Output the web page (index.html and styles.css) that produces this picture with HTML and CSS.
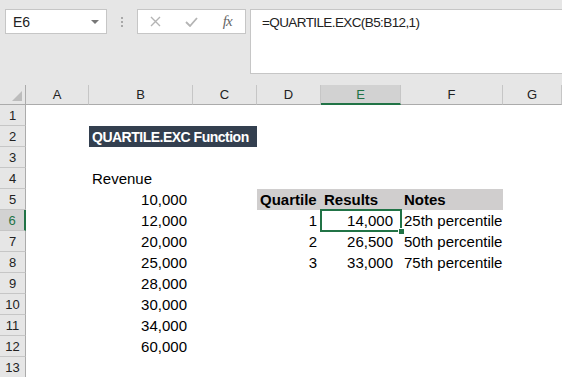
FILE: index.html
```html
<!DOCTYPE html>
<html lang="en">
<head>
  <meta charset="UTF-8">
  <meta name="viewport" content="width=device-width, initial-scale=1.0">
  <title>QUARTILE.EXC Function</title>
  <link rel="stylesheet" href="styles.css">
</head>
<body>
  <div class="toolbar">
    <div class="namebox">
      <span>E6</span>
      <span class="caret"></span>
    </div>
    <div class="grip"><span></span><span></span><span></span></div>
    <div class="fxbar">
      <span class="fxbtn">
        <svg width="11" height="11" viewBox="0 0 11 11"><path d="M1 1 L10 10 M10 1 L1 10" stroke="#b4b4b4" stroke-width="1.4" fill="none"/></svg>
      </span>
      <span class="fxbtn">
        <svg width="13" height="10" viewBox="0 0 13 10"><path d="M1 5 L5 9 L12 1" stroke="#b4b4b4" stroke-width="1.8" fill="none"/></svg>
      </span>
      <span class="fxbtn fx">fx</span>
    </div>
    <div class="formula">=QUARTILE.EXC(B5:B12,1)</div>
  </div>

  <div class="sheet">
    <div class="row head">
      <div class="corner"><span class="tri"></span></div>
      <div class="ch">A</div>
      <div class="ch">B</div>
      <div class="ch">C</div>
      <div class="ch">D</div>
      <div class="ch on">E</div>
      <div class="ch">F</div>
      <div class="ch">G</div>
    </div>
    <div class="row"><div class="rh">1</div></div>
    <div class="row"><div class="rh">2</div><div class="cell title">QUARTILE.EXC Function</div></div>
    <div class="row"><div class="rh">3</div></div>
    <div class="row"><div class="rh">4</div><div class="cell col-b">Revenue</div></div>
    <div class="row">
      <div class="rh">5</div>
      <div class="cell col-b num">10,000</div>
      <div class="cell col-d th">Quartile</div>
      <div class="cell col-e th">Results</div>
      <div class="cell col-f th">Notes</div>
    </div>
    <div class="row">
      <div class="rh on">6</div>
      <div class="cell col-b num">12,000</div>
      <div class="cell col-d int">1</div>
      <div class="cell col-e res active">14,000</div>
      <div class="cell col-f">25th percentile</div>
    </div>
    <div class="row">
      <div class="rh">7</div>
      <div class="cell col-b num">20,000</div>
      <div class="cell col-d int">2</div>
      <div class="cell col-e res">26,500</div>
      <div class="cell col-f">50th percentile</div>
    </div>
    <div class="row">
      <div class="rh">8</div>
      <div class="cell col-b num">25,000</div>
      <div class="cell col-d int">3</div>
      <div class="cell col-e res">33,000</div>
      <div class="cell col-f">75th percentile</div>
    </div>
    <div class="row"><div class="rh">9</div><div class="cell col-b num">28,000</div></div>
    <div class="row"><div class="rh">10</div><div class="cell col-b num">30,000</div></div>
    <div class="row"><div class="rh">11</div><div class="cell col-b num">34,000</div></div>
    <div class="row"><div class="rh">12</div><div class="cell col-b num">60,000</div></div>
    <div class="row"><div class="rh">13</div></div>
  </div>
</body>
</html>
```

FILE: styles.css
```css
* {
  box-sizing: border-box;
}
body {
  margin: 0;
  width: 562px;
  height: 377px;
  overflow: hidden;
  font-family: "Liberation Sans", Arial, sans-serif;
  background-color: #fff;
  color: #000;
}
.toolbar {
  display: flex;
  align-items: flex-start;
  height: 85px;
  padding: 9px 0 0 5px;
  background-color: #e6e6e6;
}
.namebox {
  display: flex;
  justify-content: space-between;
  align-items: center;
  width: 102px;
  height: 25px;
  padding: 0 7px 0 7px;
  background-color: #fff;
  border: 1px solid #c6c6c6;
  font-size: 14px;
  color: #222;
}
.caret {
  width: 0;
  height: 0;
  border-left: 4px solid transparent;
  border-right: 4px solid transparent;
  border-top: 4px solid #777;
}
.grip {
  display: flex;
  flex-direction: column;
  gap: 2px;
  margin: 8px 0 0 14px;
}
.grip span {
  width: 2px;
  height: 2px;
  background-color: #a8a8a8;
}
.fxbar {
  display: flex;
  align-items: center;
  width: 109px;
  height: 25px;
  margin-left: 14px;
  background-color: #fff;
  border: 1px solid #c6c6c6;
}
.fxbtn {
  display: flex;
  justify-content: center;
  align-items: center;
  width: 36px;
}
.fx {
  font-family: "Liberation Serif", serif;
  font-style: italic;
  font-size: 15px;
  color: #666;
  letter-spacing: -1px;
}
.formula {
  flex: 1;
  height: 65px;
  margin-left: 4px;
  padding: 3px 0 0 11px;
  background-color: #fff;
  border: 1px solid #c6c6c6;
  border-right: none;
  font-size: 13.5px;
  line-height: 20px;
  letter-spacing: -0.6px;
  color: #222;
}
.row {
  display: grid;
  grid-template-columns: 26px 63px 104px 64px 64px 80px 102px 1fr;
  grid-template-rows: 21px;
  font-size: 15px;
}
.row.head {
  grid-template-rows: 20px;
  background-color: #e6e6e6;
}
.corner {
  display: flex;
  justify-content: flex-end;
  align-items: flex-end;
  padding: 0 3px 3px 0;
  border-right: 1px solid #ababab;
  border-bottom: 1px solid #ababab;
}
.tri {
  width: 0;
  height: 0;
  border-left: 10px solid transparent;
  border-bottom: 10px solid #bcbcbc;
}
.ch {
  display: flex;
  justify-content: center;
  align-items: center;
  font-size: 13px;
  color: #222;
  border-right: 1px solid #c6c6c6;
  border-bottom: 1px solid #ababab;
}
.ch.on {
  background-color: #d2d2d2;
  color: #217346;
  border-bottom: 2px solid #217346;
}
.rh {
  grid-column: 1;
  display: flex;
  justify-content: center;
  align-items: center;
  font-size: 13px;
  color: #222;
  background-color: #e6e6e6;
  border-right: 1px solid #ababab;
  border-bottom: 1px solid #c6c6c6;
}
.rh.on {
  background-color: #d2d2d2;
  color: #217346;
  border-right: 2px solid #217346;
}
.cell {
  padding: 1px 3px 0 3px;
  line-height: 20px;
  white-space: nowrap;
}
.col-b { grid-column: 3; }
.col-d { grid-column: 5; }
.col-e { grid-column: 6; }
.col-f { grid-column: 7; }
.title {
  grid-column: 3 / span 2;
  background-color: #333f4f;
  color: #fff;
  font-weight: bold;
  font-size: 14px;
  letter-spacing: -0.5px;
}
.th {
  background-color: #d0cece;
  font-weight: bold;
}
.num {
  text-align: right;
  padding-right: 6px;
}
.res {
  text-align: right;
  padding-right: 8px;
}
.int {
  text-align: right;
  padding-right: 4px;
}
.active {
  position: relative;
  outline: 2px solid #217346;
  outline-offset: -1px;
}
.active::after {
  content: "";
  position: absolute;
  right: -4px;
  bottom: -4px;
  width: 5px;
  height: 5px;
  background-color: #217346;
  border: 1px solid #fff;
}
```
